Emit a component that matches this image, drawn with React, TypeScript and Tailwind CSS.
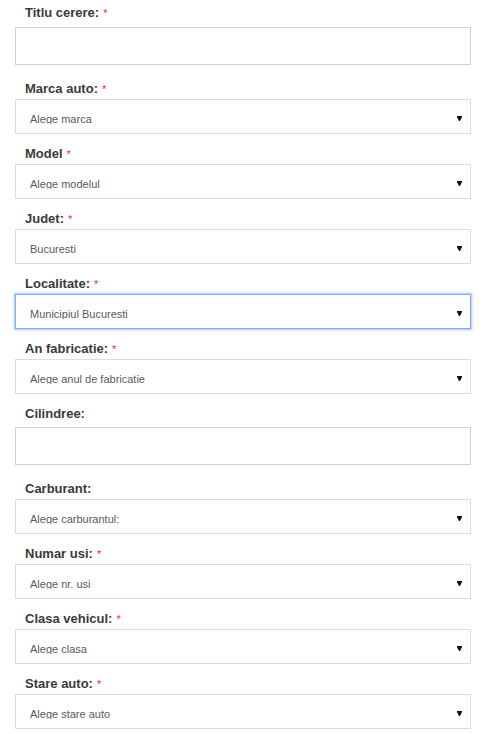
const selects: { label: string; required: boolean; value: string; focused?: boolean }[] = [
  { label: 'Marca auto:', required: true, value: 'Alege marca' },
  { label: 'Model', required: true, value: 'Alege modelul' },
  { label: 'Judet:', required: true, value: 'Bucuresti' },
  { label: 'Localitate:', required: true, value: 'Municipiul Bucuresti', focused: true },
  { label: 'An fabricatie:', required: true, value: 'Alege anul de fabricatie' },
];

const selects2 = [
  { label: 'Carburant:', required: false, value: 'Alege carburantul:' },
  { label: 'Numar usi:', required: true, value: 'Alege nr. usi' },
  { label: 'Clasa vehicul:', required: true, value: 'Alege clasa' },
  { label: 'Stare auto:', required: true, value: 'Alege stare auto' },
];

const Label = ({ text, required }: { text: string; required: boolean }) => (
  <label className="block h-[15px] pl-[10px] text-[13px] leading-[15px] font-bold text-[#3a3a3a]">
    {text}
    {required && <span className="ml-[4px] text-[11px] font-normal text-[#e8312f]">*</span>}
  </label>
);

const Arrow = () => (
  <svg width="5" height="5" viewBox="0 0 5 5" className="absolute right-[8px] top-[16px]">
    <polygon points="0,0 5,0 5,1 3,5 2,5 0,1" fill="#111" />
  </svg>
);

const SelectField = ({ label, required, value, focused }: { label: string; required: boolean; value: string; focused?: boolean }) => (
  <div className="pt-[12px]">
    <Label text={label} required={required} />
    <div
      className={`relative mt-[3px] h-[35px] border bg-white pl-[14px] pt-[14px] ${
        focused ? 'border-[#7eaee8] shadow-[0_0_2px_1px_rgba(102,160,233,0.6)]' : 'border-[#dcdcdc]'
      }`}
    >
      <span className="block h-[10px] overflow-hidden text-[11px] leading-[11px] text-[#5a5a5a]">{value}</span>
      <Arrow />
    </div>
  </div>
);

const TextField = ({ label, first }: { label: string; first?: boolean }) => (
  <div className={first ? 'pt-[5px] pb-[4px]' : 'pt-[12px] pb-[4px]'}>
    <Label text={label} required={!!first} />
    <div className={`${first ? 'mt-[7px]' : 'mt-[6px]'} h-[38px] border border-[#cfcfcf] bg-white`} />
  </div>
);

export default function App() {
  return (
    <div className="min-h-[734px] bg-white font-['Liberation_Sans',Arial,sans-serif]">
      <form className="ml-[15px] w-[456px]">
        <TextField label="Titlu cerere:" first />
        {selects.map((s) => (
          <SelectField key={s.label} {...s} />
        ))}
        <TextField label="Cilindree:" />
        {selects2.map((s) => (
          <SelectField key={s.label} {...s} />
        ))}
      </form>
    </div>
  );
}
